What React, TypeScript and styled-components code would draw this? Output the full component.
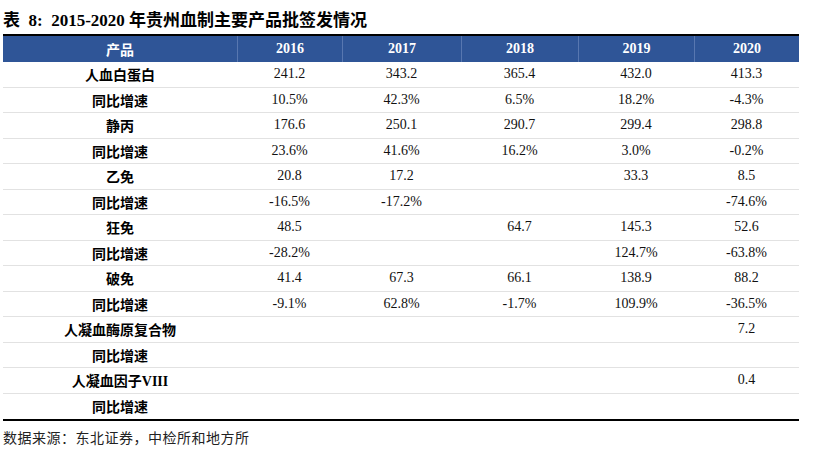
import React from 'react';
import styled, { createGlobalStyle } from 'styled-components';

const GlobalStyle = createGlobalStyle`
  body {
    margin: 0;
    background: #fff;
  }
`;

const COLS = '234px 105px 119px 117px 116px 105px';

const Page = styled.div`
  padding: 10px 0 0 3px;
  width: 796px;
`;

const Title = styled.h1`
  margin: 0 0 2px;
  height: 22px;
  font: 700 17px/22px 'Liberation Serif', 'Noto Sans CJK SC', serif;
  color: #000;
  white-space: pre;
`;

const Table = styled.div`
  border-top: 2px solid #000;
  border-bottom: 2px solid #000;
`;

const HeaderRow = styled.div`
  display: grid;
  grid-template-columns: ${COLS};
  height: 26px;
  background: #2f5597;
`;

const HeadCell = styled.div<{ $first?: boolean }>`
  display: flex;
  align-items: center;
  justify-content: center;
  color: #fff;
  font: 700 14px 'Liberation Serif', 'Noto Sans CJK SC', serif;
  border-left: ${(p) => (p.$first ? 'none' : '1px solid #5877b0')};
`;

const Row = styled.div`
  display: grid;
  grid-template-columns: ${COLS};
  height: 25.5px;
  box-sizing: border-box;
  border-bottom: 1px solid #e2e2e2;
  &:last-child {
    border-bottom: none;
  }
`;

const Label = styled.div`
  display: flex;
  align-items: center;
  justify-content: center;
  font: 700 14px 'Liberation Serif', 'Noto Sans CJK SC', serif;
  color: #000;
`;

const Value = styled.div`
  display: flex;
  align-items: center;
  justify-content: center;
  font: 400 14px 'Liberation Serif', serif;
  color: #111;
`;

const Source = styled.div`
  margin-top: 6px;
  font: 400 14px/20px 'Noto Sans CJK SC', sans-serif;
  letter-spacing: 0.5px;
  color: #222;
`;

const years = ['2016', '2017', '2018', '2019', '2020'];

const rows: [string, string[]][] = [
  ['人血白蛋白', ['241.2', '343.2', '365.4', '432.0', '413.3']],
  ['同比增速', ['10.5%', '42.3%', '6.5%', '18.2%', '-4.3%']],
  ['静丙', ['176.6', '250.1', '290.7', '299.4', '298.8']],
  ['同比增速', ['23.6%', '41.6%', '16.2%', '3.0%', '-0.2%']],
  ['乙免', ['20.8', '17.2', '', '33.3', '8.5']],
  ['同比增速', ['-16.5%', '-17.2%', '', '', '-74.6%']],
  ['狂免', ['48.5', '', '64.7', '145.3', '52.6']],
  ['同比增速', ['-28.2%', '', '', '124.7%', '-63.8%']],
  ['破免', ['41.4', '67.3', '66.1', '138.9', '88.2']],
  ['同比增速', ['-9.1%', '62.8%', '-1.7%', '109.9%', '-36.5%']],
  ['人凝血酶原复合物', ['', '', '', '', '7.2']],
  ['同比增速', ['', '', '', '', '']],
  ['人凝血因子VIII', ['', '', '', '', '0.4']],
  ['同比增速', ['', '', '', '', '']],
];

const App: React.FC = () => {
  return (
    <Page>
      <GlobalStyle />
      <Title>{'表  8:  2015-2020 年贵州血制主要产品批签发情况'}</Title>
      <Table>
        <HeaderRow>
          <HeadCell $first>产品</HeadCell>
          {years.map((y) => (
            <HeadCell key={y}>{y}</HeadCell>
          ))}
        </HeaderRow>
        {rows.map(([name, values], i) => (
          <Row key={i}>
            <Label>{name}</Label>
            {values.map((v, j) => (
              <Value key={j}>{v}</Value>
            ))}
          </Row>
        ))}
      </Table>
      <Source>数据来源：东北证券，中检所和地方所</Source>
    </Page>
  );
};

export default App;
